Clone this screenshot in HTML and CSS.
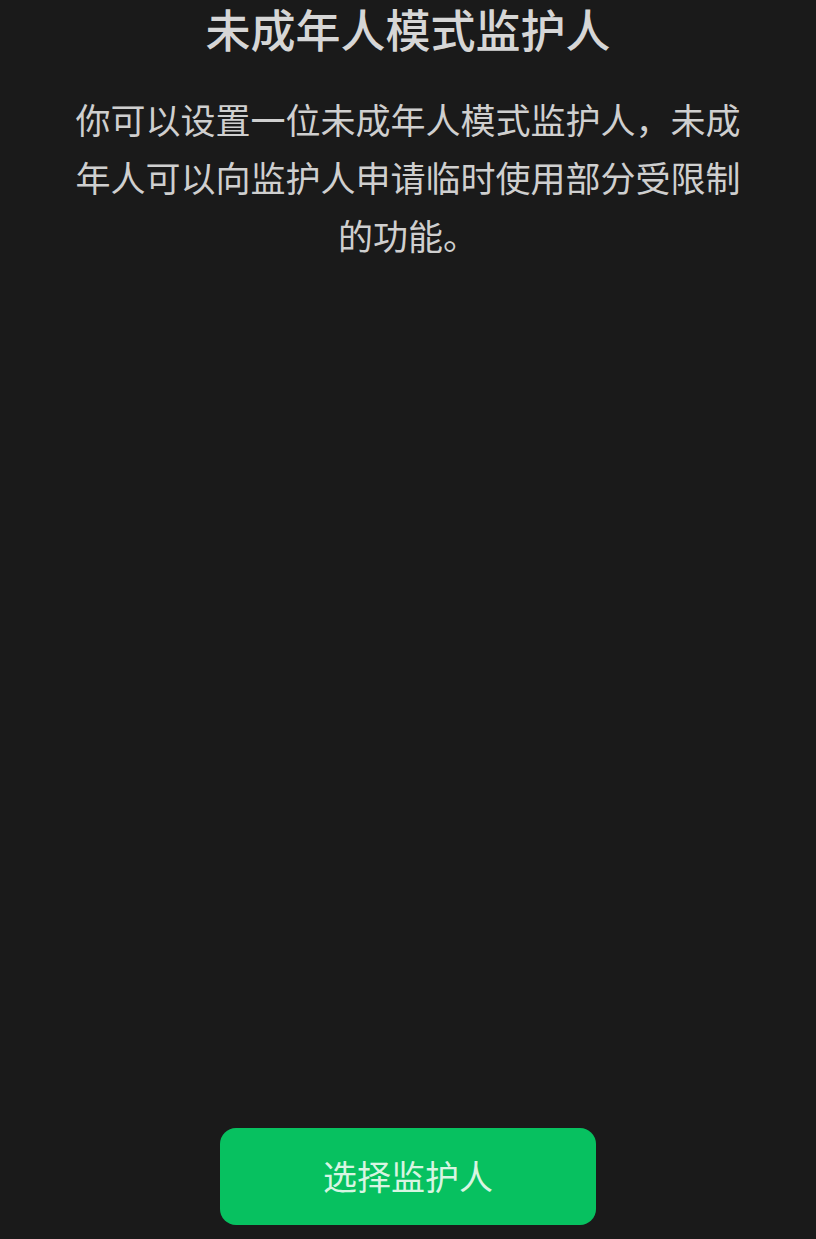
FILE: index.html
```html
<!DOCTYPE html>
<html lang="zh-CN">
<head>
<meta charset="utf-8">
<title>未成年人模式监护人</title>
<link rel="stylesheet" href="styles.css">
</head>
<body>
<div class="page">
  <header class="intro">
    <h1 class="title">未成年人模式监护人</h1>
    <p class="desc">你可以设置一位未成年人模式监护人，未成年人可以向监护人申请临时使用部分受限制的功能。</p>
  </header>
  <div class="spacer"></div>
  <footer class="actions">
    <button class="primary-btn" type="button">选择监护人</button>
  </footer>
</div>
</body>
</html>
```

FILE: styles.css
```css
html, body {
  margin: 0;
  padding: 0;
  background: #1a1a1a;
}

body {
  font-family: "Noto Sans CJK SC", "Noto Sans", sans-serif;
}

.page {
  height: 1239px;
  display: flex;
  flex-direction: column;
  box-sizing: border-box;
}

.intro {
  display: flex;
  flex-direction: column;
  align-items: center;
  padding: 6px 74px 0;
}

.title {
  margin: 0;
  font-size: 45px;
  line-height: 46px;
  font-weight: 500;
  color: #d6d6d6;
  text-align: center;
}

.desc {
  margin: 38px 0 0;
  font-size: 35px;
  line-height: 58px;
  font-weight: 400;
  color: #cfcfcf;
  text-align: center;
}

.spacer {
  flex: 1;
}

.actions {
  display: flex;
  justify-content: center;
  padding-bottom: 14px;
}

.primary-btn {
  width: 376px;
  height: 97px;
  border: none;
  border-radius: 16px;
  background: #07c160;
  color: #d8f5e2;
  font-family: "Noto Sans CJK SC", "Noto Sans", sans-serif;
  font-size: 34px;
  font-weight: 400;
  padding: 0 0 2px;
  cursor: pointer;
}
```
